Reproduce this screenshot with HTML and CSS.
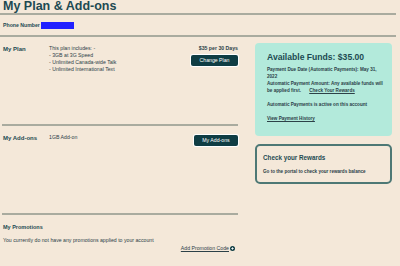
FILE: index.html
```html
<html>
    <head>
        <title>My Plan &amp; Add-ons</title>
        <link rel="stylesheet" href="styles.css">
    </head>
    <body>
        <h1 class="page-title">My Plan &amp; Add-ons</h1>
        <div class="rule full"></div>
        <div class="phone-row">
            <span class="phone-label">Phone Number</span>
            <span class="phone-box"></span>
        </div>
        <div class="rule full"></div>

        <div class="main">
            <div class="left-col">
                <div class="section plan">
                    <div class="label">My Plan</div>
                    <div class="details">
                        This plan includes: -<br>
                        - 3GB at 3G Speed<br>
                        - Unlimited Canada-wide Talk<br>
                        - Unlimited International Text
                    </div>
                    <div class="actions">
                        <div class="price">$35 per 30 Days</div>
                        <a class="btn btn-wide" href="#">Change Plan</a>
                    </div>
                </div>
                <div class="rule"></div>
                <div class="section addons">
                    <div class="label">My Add-ons</div>
                    <div class="details">1GB Add-on</div>
                    <div class="actions">
                        <a class="btn" href="#">My Add-ons</a>
                    </div>
                </div>
                <div class="rule"></div>
                <div class="section promos">
                    <div class="label">My Promotions</div>
                    <div class="promo-text">You currently do not have any promotions applied to your account</div>
                    <div class="promo-link">
                        <a href="#">Add Promotion Code</a>
                        <svg width="5" height="5" viewBox="0 0 10 10">
                            <circle cx="5" cy="5" r="5" fill="#0f3d44"/>
                            <path d="M5 2.5v5M2.5 5h5" stroke="#fff" stroke-width="1.6"/>
                        </svg>
                    </div>
                </div>
            </div>

            <div class="right-col">
                <div class="card funds">
                    <div class="funds-title">Available Funds: $35.00</div>
                    <p>Payment Due Date (Automatic Payments): May 31, 2022</p>
                    <p>Automatic Payment Amount: Any available funds will<br>
                    <span>be applied first.</span> <a class="gap-link" href="#">Check Your Rewards</a></p>
                    <p class="spaced">Automatic Payments is active on this account</p>
                    <p class="spaced"><a href="#">View Payment History</a></p>
                </div>
                <div class="card rewards">
                    <div class="rewards-title">Check your Rewards</div>
                    <p>Go to the portal to check your rewards balance</p>
                </div>
            </div>
        </div>
    </body>
</html>
```

FILE: styles.css
```css
body {
margin: 0;
background-color: #f4e8d9;
font-family: "Liberation Sans", Arial, sans-serif;
color: #2c4148;
font-size: 5.2px;
}
a {
color: #2c4148;
}
.page-title {
margin: 0;
padding: 0 3px;
height: 13px;
font-size: 12.5px;
line-height: 13px;
color: #1d4a52;
}
.rule {
height: 2px;
background-color: #a9ab9f;
}
.rule.full {
margin-right: 4px;
}
.phone-row {
height: 20px;
display: flex;
align-items: center;
padding-left: 3px;
}
.phone-label {
font-weight: bold;
color: #1d4a52;
}
.phone-box {
display: inline-block;
width: 33px;
height: 7px;
margin-left: 1px;
background-color: #2020ff;
}
.main {
display: flex;
}
.left-col {
width: 236px;
margin-left: 2px;
}
.section {
display: flex;
padding-left: 1px;
}
.plan {
height: 87px;
padding-top: 9px;
box-sizing: border-box;
}
.addons {
height: 87px;
padding-top: 9px;
box-sizing: border-box;
}
.label {
width: 46px;
font-weight: bold;
font-size: 6px;
color: #1d4a52;
}
.details {
flex: 1;
line-height: 7px;
margin-top: -1px;
}
.actions {
display: flex;
flex-direction: column;
align-items: flex-end;
}
.price {
font-weight: bold;
margin-top: -1px;
}
.btn {
display: block;
background-color: #0f3d44;
color: white;
text-decoration: none;
border-radius: 2px;
text-align: center;
width: 44px;
height: 11px;
line-height: 11px;
box-shadow: 0 0 0 1px #fff;
}
.btn-wide {
width: 47px;
margin-top: 4px;
}
.promos {
flex-direction: column;
padding-top: 9px;
}
.promos .label {
width: auto;
font-size: 5.5px;
}
.promo-text {
margin-top: 7px;
}
.promo-link {
display: flex;
justify-content: flex-end;
align-items: center;
gap: 1px;
margin-top: 2px;
margin-right: 3px;
}
.right-col {
margin-left: 17px;
padding-top: 6px;
width: 137px;
}
.card {
border-radius: 4px;
box-sizing: border-box;
}
.card p {
margin: 0;
}
.funds {
height: 93px;
background-color: #b3eadb;
padding: 8px 7px 8px 12px;
font-weight: bold;
font-size: 4.6px;
line-height: 7px;
}
.funds-title {
font-size: 8.6px;
line-height: 12px;
color: #1d4a52;
margin-bottom: 3px;
}
.funds p.spaced {
margin-top: 7px;
}
.gap-link {
margin-left: 7px;
}
.rewards {
margin-top: 8px;
height: 40px;
border: 2px solid #4d7875;
border-radius: 5px;
padding: 8px 6px;
font-weight: bold;
font-size: 4.6px;
}
.rewards-title {
font-size: 6.3px;
color: #1d4a52;
margin-bottom: 8px;
}
```
